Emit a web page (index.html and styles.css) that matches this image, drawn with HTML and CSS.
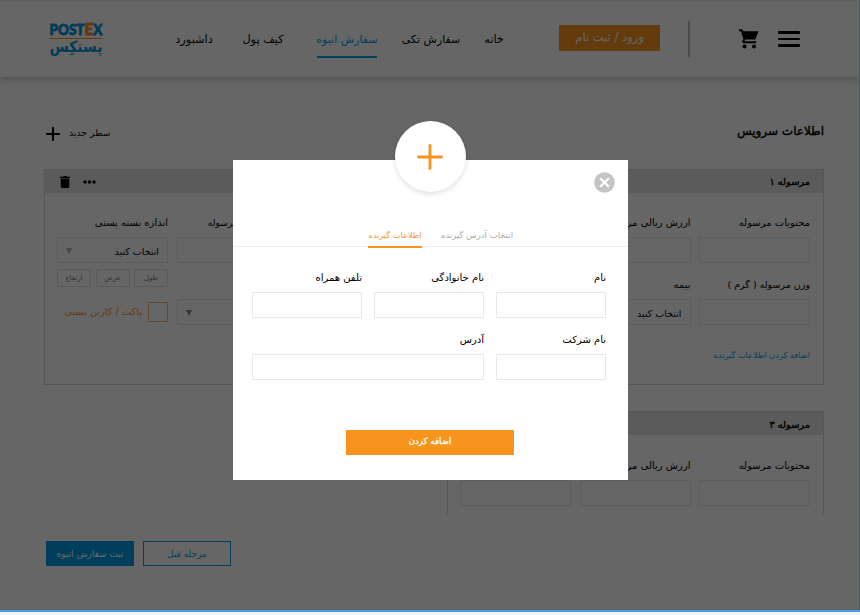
FILE: index.html
```html
<!DOCTYPE html>
<html lang="fa" dir="rtl">
<head>
<meta charset="utf-8">
<title>پستکس</title>
<link rel="stylesheet" href="styles.css">
</head>
<body>
<div class="page">
  <header class="header">
    <svg class="logo" width="56" height="40" viewBox="0 0 56 40" direction="ltr">
      <text class="logo-latin" x="1.500" y="14" textLength="53" lengthAdjust="spacingAndGlyphs">POST<tspan class="logo-e">E</tspan>X</text>
      <rect x="1.500" y="17" width="53" height="1" fill="#f7941e"/>
      <text class="logo-fa" x="1.500" y="30.500" textLength="53" lengthAdjust="spacingAndGlyphs">پستکِس</text>
    </svg>
    <nav class="nav">
      <a class="nav-dashboard">داشبورد</a>
      <a class="nav-wallet">کیف پول</a>
      <a class="nav-bulk">سفارش انبوه</a>
      <a class="nav-single">سفارش تکی</a>
      <a class="nav-home">خانه</a>
    </nav>
    <a class="login">ورود / ثبت نام</a>
    <span class="divider"></span>
    <svg class="cart" width="20" height="20" viewBox="0 0 20 20"><path d="M0 .3h3.200l1 2H19.500L16.200 10.500H6.300l-1 1.800h12v2H4.500Q2.500 13.800 3.300 12l1.200-2L1.800 2.300H0z"/><circle cx="5.500" cy="17.600" r="2"/><circle cx="15" cy="17.600" r="2"/></svg>
    <span class="menu"><i></i><i></i><i></i></span>
  </header>

  <div class="title-row">
    <h1>اطلاعات سرویس</h1>
    <div class="new-row"><span>سطر جدید</span><svg width="14" height="14" viewBox="0 0 14 14"><path d="M7 1v12M1 7h12" stroke="#000" stroke-width="2.100" stroke-linecap="round"/></svg></div>
  </div>

  <section class="card">
    <div class="card-head">
      <h2>مرسوله ۱</h2>
      <div class="card-tools">
        <svg width="13" height="4" viewBox="0 0 13 4"><circle cx="2" cy="2" r="1.700"/><circle cx="6.500" cy="2" r="1.700"/><circle cx="11" cy="2" r="1.700"/></svg>
        <svg width="10" height="12" viewBox="0 0 10 12"><path d="M0 .8h2.800L3.500 0h3l.7.8H10V2H0zM.7 2.600h8.600v8q0 1.400-1.400 1.400H2.100Q.7 12 .7 10.600z"/></svg>
      </div>
    </div>
    <div class="card-body">
      <div class="group">
        <div class="col">
          <label>محتویات مرسوله</label><div class="box"></div>
          <label class="weight">وزن مرسوله ( گرم )</label><div class="box"></div>
          <a class="add-link">اضافه کردن اطلاعات گیرنده</a>
        </div>
        <div class="col">
          <label>ارزش ریالی مرسوله</label><div class="box"></div>
          <label>بیمه</label><div class="box select">انتخاب کنید</div>
        </div>
      </div>
      <div class="group">
        <div class="col">
          <label class="narrow">ارزش ریالی مرسوله</label><div class="box"></div>
          <div class="box select second"><span></span><i class="arrow arrow-dark"></i></div>
        </div>
        <div class="col">
          <label>اندازه بسته پستی</label><div class="box select"><span>انتخاب کنید</span><i class="arrow"></i></div>
          <div class="dims"><span>طول</span><span>عرض</span><span>ارتفاع</span></div>
          <div class="check"><i></i><span>پاکت / کارتن پستی</span></div>
        </div>
      </div>
    </div>
  </section>

  <section class="card card-short">
    <div class="card-head"><h2>مرسوله ۳</h2></div>
    <div class="card-body">
      <div class="group">
        <div class="col"><label>محتویات مرسوله</label><div class="box"></div></div>
        <div class="col"><label>ارزش ریالی مرسوله</label><div class="box"></div></div>
        <div class="col"><label></label><div class="box"></div></div>
      </div>
    </div>
  </section>

  <div class="actions">
    <a class="btn-outline">مرحله قبل</a>
    <a class="btn-solid">ثبت سفارش انبوه</a>
  </div>

  <div class="overlay"></div>

  <div class="modal">
    <div class="modal-badge"><svg width="26" height="26" viewBox="0 0 26 26"><path d="M13 1.500v23M1.500 13h23" stroke="#f7941e" stroke-width="2.900" stroke-linecap="round"/></svg></div>
    <svg class="close" width="21" height="21" viewBox="0 0 21 21"><circle cx="10.500" cy="10.500" r="10.300" fill="#c4c4c4"/><path d="M6.200 6.200l8.600 8.600M14.800 6.200l-8.600 8.600" stroke="#fff" stroke-width="2.300"/></svg>
    <div class="tabs">
      <a class="tab">انتخاب آدرس گیرنده</a>
      <a class="tab tab-on">اطلاعات گیرنده</a>
    </div>
    <div class="form">
      <div><label>نام</label><div class="box"></div></div>
      <div><label>نام خانوادگی</label><div class="box"></div></div>
      <div><label>تلفن همراه</label><div class="box"></div></div>
      <div><label>نام شرکت</label><div class="box"></div></div>
      <div class="wide"><label>آدرس</label><div class="box"></div></div>
    </div>
    <a class="submit">اضافه کردن</a>
  </div>
</div>
<div class="bottom-line"></div>
</body>
</html>
```
FILE: styles.css
```css
* { box-sizing: border-box; }
body { margin: 0; background: #f2f4f6; font-family: "DejaVu Sans", sans-serif; color: #000; height: 615px; overflow: hidden; }
h1, h2 { margin: 0; font-weight: normal; -webkit-text-stroke: .4px #000; }
a, span, label, h1, h2 { white-space: nowrap; }
.page { position: relative; height: 610px; background: #fff; overflow: hidden; }
.bottom-line { height: 2px; background: #4a9ce0; }

.header { direction: ltr; display: flex; align-items: flex-start; height: 77px; padding-left: 48px; box-shadow: 0 3px 7px rgba(0,0,0,.2); border-top: 1px solid #eee; }
.logo { margin-top: 20px; flex: none; }
.logo-latin { font: 900 15px "Lato", sans-serif; fill: #0095da; stroke: #0095da; stroke-width: .8; }
.logo-e { fill: #f7941e; stroke: #f7941e; font-size: 17px; }
.logo-fa { font: bold 15.500px "DejaVu Sans", sans-serif; fill: #0095da; }
.nav { display: flex; margin-left: 72px; font-size: 11.300px; line-height: 22px; margin-top: 28px; direction: ltr; }
.nav a { display: flex; justify-content: center; flex: none; direction: rtl; }
.nav-dashboard { width: 36px; }
.nav-wallet { width: 42px; margin-left: 30px; }
.nav .nav-bulk { width: 60px; margin-left: 33px; height: 29px; color: #009fe3; font-size: 11px; border-bottom: 2px solid #009fe3; }
.nav .nav-single { width: 58px; margin-left: 25px; font-size: 11px; }
.nav-home { width: 22px; margin-left: 23px; }
.login { width: 101px; height: 26px; margin: 24px 0 0 54px; background: #f7941e; color: #fff; font-size: 11.500px; line-height: 24px; text-align: center; direction: rtl; }
.divider { width: 2px; height: 36px; margin: 20px 0 0 28px; background: #bbb; }
.cart { margin: 28px 0 0 49px; }
.menu { display: grid; gap: 4px; width: 22px; margin: 30px 0 0 19px; }
.menu i { height: 2.500px; border-radius: 1px; background: #000; }

.title-row { display: flex; justify-content: space-between; padding: 44px 36px 0 46px; height: 92px; }
h1 { font-size: 12px; line-height: 20px; }
.new-row { display: flex; gap: 9px; font-size: 9.300px; line-height: 24px; }
.new-row svg { margin-top: 6px; }

.card { width: 780px; height: 216px; margin-right: 36px; border: 1px solid #d8d8d8; }
.card-head { display: flex; justify-content: space-between; height: 23px; padding: 0 13px 0 15px; background: #e4e4e4; line-height: 23px; }
h2 { font-size: 9.800px; }
.card-tools { display: flex; align-items: center; gap: 13px; }
.card-body { display: flex; justify-content: space-between; padding: 19px 13px 0 12px; }
.group { display: flex; gap: 8.500px; }
.col { width: 111px; }
label { display: block; height: 25px; font-size: 10px; line-height: 21px; }
label.weight { font-size: 9.500px; }
label.narrow { font-size: 9.300px; }
.box { height: 26px; margin-bottom: 11px; border: 1px solid #e8e8e8; }
.select { display: flex; align-items: center; justify-content: space-between; padding: 2px 8px 0; font-size: 9.500px; }
.col .second { margin-top: 36px; }
.arrow { border: 3px solid transparent; border-top: 6px solid #b5b5b5; border-bottom: 0; }
.arrow-dark { border-top-color: #888; }
.add-link { display: block; margin-top: 20px; font-size: 8.200px; line-height: 20px; color: #009fe3; }
.dims { display: flex; justify-content: space-between; margin-top: -5px; }
.dims span { width: 34px; height: 18px; border: 1px solid #e2e2e2; color: #777; font-size: 7px; line-height: 16px; text-align: center; }
.check { display: flex; gap: 6px; margin-top: 15px; color: #f7941e; font-size: 9.800px; line-height: 19px; }
.check i { width: 20px; height: 20px; border: 1px solid #f9b76a; }

.card-short { width: 377px; height: 103px; margin-top: 26px; border-bottom: 0; }
.card-short .card-head { line-height: 25px; }
.card-short .card-body { padding-top: 20px; }
.actions { display: flex; justify-content: flex-end; gap: 9px; margin-top: 27px; padding-left: 46px; font-size: 9px; line-height: 24px; text-align: center; }
.actions a { width: 88px; height: 25px; border: 1px solid #009fe3; color: #009fe3; }
.actions .btn-solid { background: #009fe3; color: #fff; }

.overlay { position: absolute; inset: 0; background: rgba(0,0,0,.6); border-right: 1px solid #31617f; }
.modal { position: absolute; left: 232.500px; top: 159.500px; width: 395.500px; height: 320.500px; background: #fff; }
.modal-badge { position: absolute; left: 162px; top: -38.500px; width: 71px; height: 71px; border-radius: 50%; background: #fff; box-shadow: 0 2px 5px rgba(0,0,0,.13); display: flex; align-items: center; justify-content: center; }
.close { position: absolute; right: 13.500px; top: 12px; }
.tabs { display: flex; justify-content: flex-start; gap: 19px; padding: 66.500px 115px 0 0; height: 87.500px; border-bottom: 1px solid #eee; font-size: 8.200px; line-height: 19px; }
.tab { height: 21.500px; width: 72px; color: #aaa; display: flex; justify-content: center; font-size: 8.500px; }
.tab.tab-on { width: 54px; font-size: 8.200px; color: #f7941e; border-bottom: 2px solid #f7941e; }
.form { display: grid; grid-template-columns: 110px 110px 110px; column-gap: 12px; padding: 20px 22px 0 0; }
.form .wide { grid-column: span 2; }
.form .box { border-color: #e8e8e8; }
.submit { display: block; width: 168px; height: 25px; margin: 38.500px 114px 0 0; background: #f7941e; color: #fff; text-align: center; font-size: 8.600px; line-height: 23px; -webkit-text-stroke: .3px #fff; }
```
